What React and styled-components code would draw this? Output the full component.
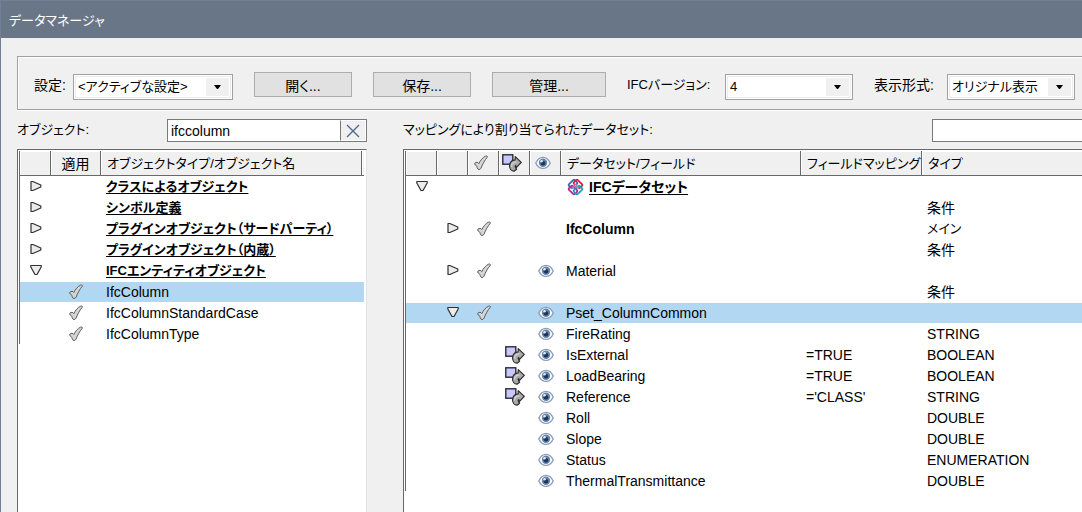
import React, { useState } from "react";
import styled, { createGlobalStyle } from "styled-components";

const GlobalStyle = createGlobalStyle`
  * {
    box-sizing: border-box;
  }
  body {
    margin: 0;
    background: #f0f0f0;
  }
  body, button, input, select {
    font-family: "Liberation Sans", "Noto Sans CJK JP", sans-serif;
    font-size: 14px;
    font-feature-settings: "palt";
    color: #000;
  }
`;

const Ventana = styled.div`
  display: flex;
  flex-direction: column;
  min-height: 100vh;
  border-left: 1px solid #718096;
  background: #f0f0f0;
  overflow: hidden;
`;

const BarraTitulo = styled.header`
  display: flex;
  align-items: center;
  height: 38px;
  padding-left: 8px;
  border-top: 1px solid #718096;
  background: #687688;
`;

const Titulo = styled.h1`
  margin: 0;
  font-size: 13px;
  font-weight: normal;
  color: #fff;
`;

const Contenido = styled.main`
  display: flex;
  flex-direction: column;
  flex: 1;
  padding: 18px 0 0 16px;
`;

const Herramientas = styled.div`
  display: flex;
  align-items: center;
  height: 54px;
  padding: 3px 0 0 16px;
  gap: 21px;
  border: 1px solid #a0a0a0;
  border-right: none;
  box-shadow: inset 1px 1px 0 #fff, 0 1px 0 #fff;
  white-space: nowrap;
`;

const Campo = styled.div`
  display: flex;
  align-items: center;
`;

const Etiqueta = styled.label`
  width: ${(props) => props.$ancho || "auto"};
  font-size: ${(props) => (props.$kana ? "13px" : "14px")};
  line-height: 22px;
  white-space: nowrap;
`;

const CajaSelect = styled.div`
  position: relative;
  width: ${(props) => props.$ancho};
  height: 26px;
  margin-top: 4px;
`;

const Select = styled.select`
  width: 100%;
  height: 100%;
  padding: 0 28px 0 4px;
  border: 1px solid #a0a0a0;
  border-radius: 0;
  background: #fff;
  box-shadow: inset 0 0 0 1px #fff, inset 0 0 0 2px #ececec;
  font-size: 13px;
  appearance: none;
`;

const Flecha = styled.span`
  position: absolute;
  top: 4px;
  right: 4px;
  display: flex;
  align-items: center;
  justify-content: center;
  width: 23px;
  height: 18px;
  background: #f0f0f0;
  pointer-events: none;
`;

const Boton = styled.button`
  width: ${(props) => props.$ancho || "98px"};
  height: 25px;
  padding: 0;
  border: 1px solid #adadad;
  background: #e1e1e1;
`;

const Paneles = styled.div`
  display: grid;
  grid-template-columns: 350px 1fr;
  column-gap: 36px;
  flex: 1;
  padding-top: 9px;
`;

const Panel = styled.section`
  display: flex;
  flex-direction: column;
  min-width: 0;
`;

const Cabecera = styled.div`
  display: flex;
  align-items: flex-start;
  justify-content: space-between;
  height: 23px;
  margin-bottom: 7px;
`;

const Busqueda = styled.div`
  display: flex;
  width: ${(props) => props.$ancho};
  height: 23px;
  border: 1px solid #7a7a7a;
  border-right: ${(props) => (props.$abierta ? "none" : "1px solid #7a7a7a")};
  background: #fff;
`;

const Entrada = styled.input`
  flex: 1;
  min-width: 0;
  padding: 0 3px;
  border: none;
  background: transparent;
  outline: none;
`;

const Limpiar = styled.button`
  display: flex;
  align-items: center;
  justify-content: center;
  width: 26px;
  padding: 0;
  border: 1px solid #fff;
  border-left: 1px solid #7a7a7a;
  background: #f0f0f0;
`;

const Lista = styled.div`
  flex: 1;
  padding: 1px ${(props) => (props.$borde ? "2px" : "0")} 0 1px;
  border-top: 1px solid #696969;
  border-left: 1px solid #696969;
  border-right: ${(props) => (props.$borde ? "1px solid #e3e3e3" : "none")};
  background: #fff;
  overflow: hidden;
`;

const Tabla = styled.table`
  width: 100%;
  table-layout: fixed;
  border-collapse: separate;
  border-spacing: 0;
  border-left: 1px solid #696969;

  svg {
    display: block;
    margin: 0 auto;
  }
`;

const Th = styled.th`
  width: ${(props) => props.$ancho || "auto"};
  height: 25px;
  padding: 2px 0 0 ${(props) => (props.$centro ? "0" : "6px")};
  border-right: 1px solid #696969;
  border-bottom: 1px solid #696969;
  background: #f0f0f0;
  box-shadow: inset 1px 1px 0 #fff;
  font-size: ${(props) => (props.$centro ? "14px" : "13px")};
  font-weight: normal;
  line-height: 20px;
  text-align: ${(props) => (props.$centro ? "center" : "left")};
  white-space: nowrap;

  &:last-child {
    border-right: none;
  }
`;

const ThIcono = styled(Th)`
  padding: 0 4px 0 0;
`;

const Fila = styled.tr`
  td {
    background: ${(props) => (props.$activa ? "#b2d7f2" : "transparent")};
    background-clip: padding-box;
  }
`;

const Td = styled.td`
  height: 21px;
  padding: 0 0 0 ${(props) => (props.$centro ? "0" : "5px")};
  border-top: 1px solid transparent;
  font-size: ${(props) => (props.$kana ? "13px" : "14px")};
  line-height: 20px;
  text-align: ${(props) => (props.$centro ? "center" : "left")};
  white-space: nowrap;
`;

const Celda = styled.div`
  display: flex;
  align-items: center;
  gap: 4px;
  height: 20px;

  svg {
    margin: 0;
  }
`;

const Nombre = styled.span`
  font-weight: ${(props) => (props.$negrita ? "bold" : "normal")};
  text-decoration: ${(props) => (props.$grupo ? "underline" : "none")};
  text-underline-offset: 2px;
`;

const Plegar = styled.button`
  display: block;
  margin: 0 auto;
  padding: 0 0 2px;
  border: none;
  background: none;
  line-height: 0;
`;

const Triangulo = ({ abierto }) => (
  <Plegar type="button" aria-label={abierto ? "閉じる" : "展開"}>
    <svg width="12" height="12" viewBox="0 0 12 12">
      <path
        d={abierto ? "M.8 1.500h10.400v1.500L7 10.500H5L.8 3z" : "M1 1.500h1.800l8 3.500v2l-8 3.500H1z"}
        fill="#ececec"
        stroke="#303030"
        strokeWidth="1.200"
        strokeLinejoin="round"
      />
    </svg>
  </Plegar>
);

const Marca = () => (
  <svg width="16" height="16" viewBox="0 0 16 16">
    <path
      d="M1.800 8.200C3.200 6.800 5.200 7.200 5.800 8.600C7.300 5.500 9.800 2.300 12.500 1.200C13.600 .8 14.800 1 14.300 2.200C12 4.800 9.500 9.200 8 13.200C7.200 15 4.800 14.800 4.300 13.200C3.900 11.800 4 10.500 1.800 9.600z"
      fill="#d6d6d6"
      stroke="#5c5c5c"
      strokeWidth="1"
      strokeLinejoin="round"
    />
  </svg>
);

const Mapeo = () => (
  <svg width="20" height="18" viewBox="0 0 20 18">
    <rect x=".8" y=".8" width="10" height="9.400" fill="#c8c8ff" stroke="#2a2a33" strokeWidth="1.400" />
    <path
      d="M13.200 2.600L19.300 8.400L13.800 14.200V11.600C13 11.800 12.800 12.600 14.600 15.200L12 17.200C9.600 17 7.400 14.800 7.600 11.600C7.900 8 10.200 6 13.200 5.800z"
      fill="#a9a9a9"
      stroke="#2c2c2c"
      strokeWidth="1.200"
      strokeLinejoin="round"
    />
    <path d="M9.400 12.800C9.400 9.800 11.500 8 14.400 8" fill="none" stroke="#d0d0d0" strokeWidth="1.400" />
  </svg>
);

const Ojo = () => (
  <svg width="16" height="14" viewBox="0 0 16 14">
    <path
      d="M.8 7C2.500 3.200 5 1.400 8 1.400S13.500 3.200 15.200 7C13.500 10.800 11 12.400 8 12.400S2.500 10.800 .8 7z"
      fill="#fff"
      stroke="#8d9db2"
      strokeWidth="1.400"
    />
    <circle cx="8" cy="6.800" r="4.200" fill="#6284ae" />
    <circle cx="8" cy="7.200" r="2.300" fill="#1d3558" />
    <circle cx="6.600" cy="5.200" r="1.200" fill="#dfe9f4" />
  </svg>
);

// cuatro eslabones girados 45 grados
const LogoIfc = () => (
  <svg width="19" height="18" viewBox="0 0 19 18" fill="none" strokeWidth="1.700">
    <rect x="2.900" y="3.300" width="8.200" height="5.400" rx="1.200" transform="rotate(-45 7 6)" stroke="#2f6cae" />
    <rect x="7.900" y="3.300" width="8.200" height="5.400" rx="1.200" transform="rotate(45 12 6)" stroke="#e5173f" />
    <rect x="2.900" y="9.300" width="8.200" height="5.400" rx="1.200" transform="rotate(45 7 12)" stroke="#b8209b" />
    <rect x="7.900" y="9.300" width="8.200" height="5.400" rx="1.200" transform="rotate(-45 12 12)" stroke="#16a3ae" />
    <path d="M5.800 10.800L10.300 6.300" stroke="#fff" strokeWidth=".6" />
    <path d="M8.600 6.300L13.200 10.800" stroke="#fff" strokeWidth=".6" />
  </svg>
);

const Desplegable = ({ id, ancho, valor }) => (
  <CajaSelect $ancho={ancho}>
    <Select id={id} defaultValue={valor}>
      <option>{valor}</option>
    </Select>
    <Flecha>
      <svg width="7" height="4" viewBox="0 0 7 4">
        <path d="M0 0h7L4 4H3z" fill="#000" />
      </svg>
    </Flecha>
  </CajaSelect>
);

const objetos = [
  { nombre: "クラスによるオブジェクト", grupo: true },
  { nombre: "シンボル定義", grupo: true },
  { nombre: "プラグインオブジェクト（サードパーティ）", grupo: true },
  { nombre: "プラグインオブジェクト（内蔵）", grupo: true },
  { nombre: "IFCエンティティオブジェクト", grupo: true, abierto: true },
  { nombre: "IfcColumn", activa: true },
  { nombre: "IfcColumnStandardCase" },
  { nombre: "IfcColumnType" },
];

const campos = [
  { nombre: "IFCデータセット", nivel: 1, abierto: true, grupo: true, negrita: true },
  { tipo: "条件" },
  { nombre: "IfcColumn", nivel: 2, marca: true, negrita: true, tipo: "メイン", kana: true },
  { tipo: "条件" },
  { nombre: "Material", nivel: 2, marca: true, ojo: true },
  { tipo: "条件" },
  { nombre: "Pset_ColumnCommon", nivel: 2, abierto: true, marca: true, ojo: true, activa: true },
  { nombre: "FireRating", ojo: true, tipo: "STRING" },
  { nombre: "IsExternal", mapeo: "=TRUE", ojo: true, tipo: "BOOLEAN" },
  { nombre: "LoadBearing", mapeo: "=TRUE", ojo: true, tipo: "BOOLEAN" },
  { nombre: "Reference", mapeo: "='CLASS'", ojo: true, tipo: "STRING" },
  { nombre: "Roll", ojo: true, tipo: "DOUBLE" },
  { nombre: "Slope", ojo: true, tipo: "DOUBLE" },
  { nombre: "Status", ojo: true, tipo: "ENUMERATION" },
  { nombre: "ThermalTransmittance", ojo: true, tipo: "DOUBLE" },
];

export default function App() {
  const [filtro, setFiltro] = useState("ifccolumn");

  return (
    <Ventana>
      <GlobalStyle />
      <BarraTitulo>
        <Titulo>データマネージャ</Titulo>
      </BarraTitulo>
      <Contenido>
        <Herramientas>
          <Campo>
            <Etiqueta htmlFor="ajuste" $ancho="39px">設定:</Etiqueta>
            <Desplegable id="ajuste" ancho="160px" valor="<アクティブな設定>" />
          </Campo>
          <Boton type="button">開く...</Boton>
          <Boton type="button">保存...</Boton>
          <Boton type="button" $ancho="114px">管理...</Boton>
          <Campo>
            <Etiqueta htmlFor="version" $ancho="98px" $kana>IFCバージョン:</Etiqueta>
            <Desplegable id="version" ancho="128px" valor="4" />
          </Campo>
          <Campo>
            <Etiqueta htmlFor="vista" $ancho="73px">表示形式:</Etiqueta>
            <Desplegable id="vista" ancho="128px" valor="オリジナル表示" />
          </Campo>
        </Herramientas>

        <Paneles>
          <Panel>
            <Cabecera>
              <Etiqueta htmlFor="filtro" $kana>オブジェクト:</Etiqueta>
              <Busqueda $ancho="200px">
                <Entrada id="filtro" value={filtro} onChange={(e) => setFiltro(e.target.value)} />
                <Limpiar type="button" aria-label="クリア" onClick={() => setFiltro("")}>
                  <svg width="14" height="14" viewBox="0 0 14 14">
                    <path d="M1 1l12 12M13 1L1 13" stroke="#4a6590" strokeWidth="1.300" />
                  </svg>
                </Limpiar>
              </Busqueda>
            </Cabecera>
            <Lista $borde>
              <Tabla>
                <thead>
                  <tr>
                    <Th $ancho="31px" />
                    <Th $ancho="50px" $centro>適用</Th>
                    <Th $ancho="261px">オブジェクトタイプ/オブジェクト名</Th>
                    <Th />
                  </tr>
                </thead>
                <tbody>
                  {objetos.map((o) => (
                    <Fila key={o.nombre} $activa={o.activa}>
                      <Td $centro>{o.grupo && <Triangulo abierto={o.abierto} />}</Td>
                      <Td $centro>{!o.grupo && <Marca />}</Td>
                      <Td $kana={o.grupo}>
                        <Nombre $negrita={o.grupo} $grupo={o.grupo}>{o.nombre}</Nombre>
                      </Td>
                      <Td $centro />
                    </Fila>
                  ))}
                </tbody>
              </Tabla>
            </Lista>
          </Panel>

          <Panel>
            <Cabecera>
              <Etiqueta htmlFor="filtroDatos" $kana>マッピングにより割り当てられたデータセット:</Etiqueta>
              <Busqueda $ancho="150px" $abierta>
                <Entrada id="filtroDatos" />
              </Busqueda>
            </Cabecera>
            <Lista>
              <Tabla>
                <thead>
                  <tr>
                    <Th $ancho="31px" />
                    <Th $ancho="31px" />
                    <ThIcono $ancho="31px"><Marca /></ThIcono>
                    <ThIcono $ancho="31px"><Mapeo /></ThIcono>
                    <ThIcono $ancho="31px"><Ojo /></ThIcono>
                    <Th $ancho="240px">データセット/フィールド</Th>
                    <Th $ancho="121px">フィールドマッピング</Th>
                    <Th>タイプ</Th>
                  </tr>
                </thead>
                <tbody>
                  {campos.map((c, i) => (
                    <Fila key={i} $activa={c.activa}>
                      <Td $centro>{c.nivel === 1 && <Triangulo abierto={c.abierto} />}</Td>
                      <Td $centro>{c.nivel === 2 && <Triangulo abierto={c.abierto} />}</Td>
                      <Td $centro>{c.marca && <Marca />}</Td>
                      <Td $centro>{c.mapeo && <Mapeo />}</Td>
                      <Td $centro>{c.ojo && <Ojo />}</Td>
                      <Td>
                        <Celda>
                          {c.grupo && <LogoIfc />}
                          <Nombre $negrita={c.negrita} $grupo={c.grupo}>{c.nombre}</Nombre>
                        </Celda>
                      </Td>
                      <Td>{c.mapeo}</Td>
                      <Td $kana={c.kana}>{c.tipo}</Td>
                    </Fila>
                  ))}
                </tbody>
              </Tabla>
            </Lista>
          </Panel>
        </Paneles>
      </Contenido>
    </Ventana>
  );
}
